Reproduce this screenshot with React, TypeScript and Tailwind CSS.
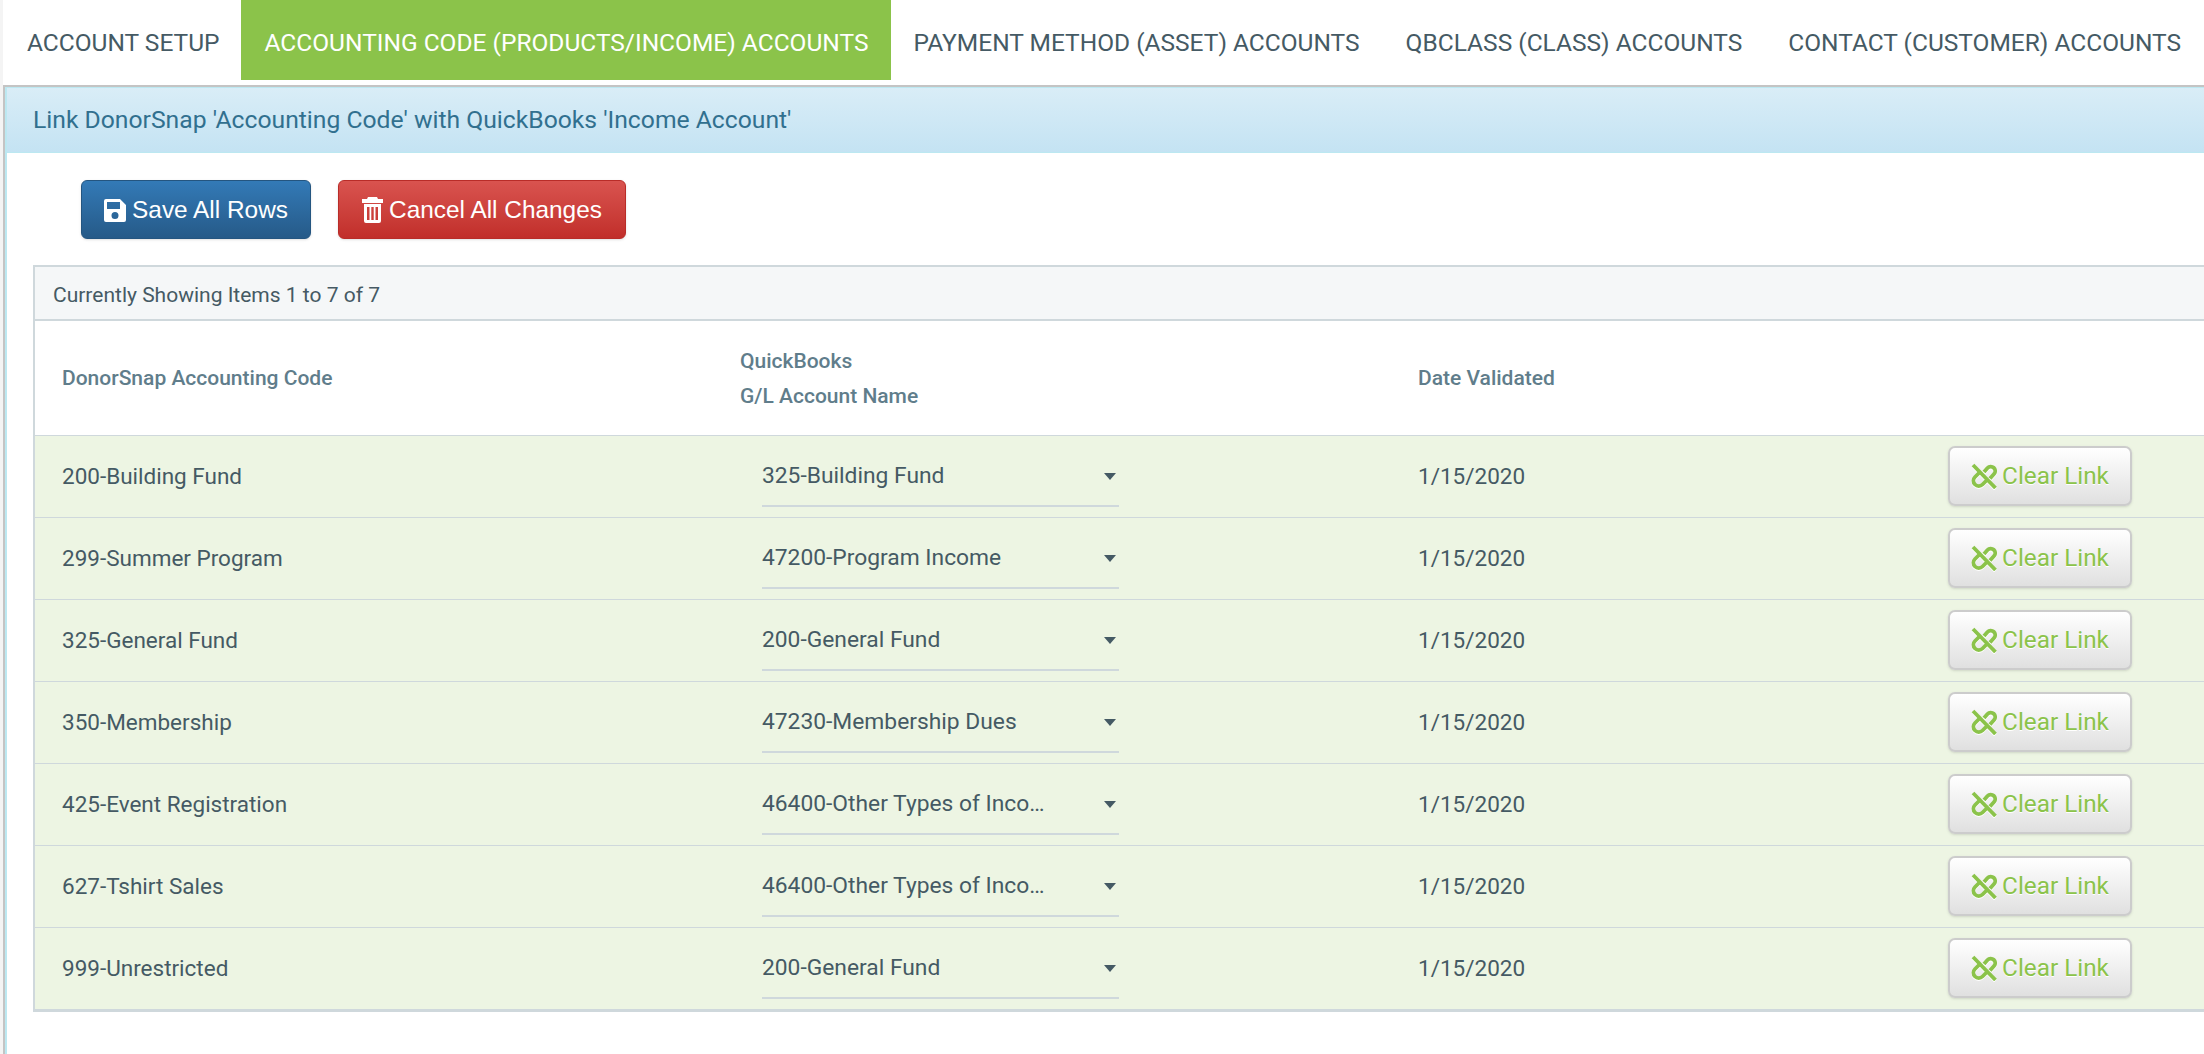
import React from "react"

const tabs = [
  "ACCOUNT SETUP",
  "ACCOUNTING CODE (PRODUCTS/INCOME) ACCOUNTS",
  "PAYMENT METHOD (ASSET) ACCOUNTS",
  "QBCLASS (CLASS) ACCOUNTS",
  "CONTACT (CUSTOMER) ACCOUNTS",
]

const rows = [
  { code: "200-Building Fund", account: "325-Building Fund" },
  { code: "299-Summer Program", account: "47200-Program Income" },
  { code: "325-General Fund", account: "200-General Fund" },
  { code: "350-Membership", account: "47230-Membership Dues" },
  { code: "425-Event Registration", account: "46400-Other Types of Income" },
  { code: "627-Tshirt Sales", account: "46400-Other Types of Income" },
  { code: "999-Unrestricted", account: "200-General Fund" },
]

function SaveIcon() {
  return (
    <svg width="22" height="23" viewBox="0 0 22 23" fill="currentColor" className="shrink-0">
      <path
        fillRule="evenodd"
        d="M2 0h14l6 6v15a2 2 0 0 1-2 2H2a2 2 0 0 1-2-2V2a2 2 0 0 1 2-2zm1 3v7h13V3zm8 10a3.500 3.500 0 1 0 0 7 3.500 3.500 0 0 0 0-7z"
      />
    </svg>
  )
}

function TrashIcon() {
  return (
    <svg width="21" height="26" viewBox="0 0 21 26" fill="currentColor" className="shrink-0">
      <path
        fillRule="evenodd"
        d="M6 0h9l1 2h5v4H0V2h5zM2 7h17v17a2 2 0 0 1-2 2H4a2 2 0 0 1-2-2zm3 3v13h2.500V10zm4.300 0v13h2.400V10zm4.200 0v13H16V10z"
      />
    </svg>
  )
}

function UnlinkIcon() {
  return (
    <svg
      width="26"
      height="26"
      viewBox="0 0 26 26"
      fill="none"
      stroke="currentColor"
      strokeWidth="3.800"
      className="shrink-0 drop-shadow-[0_1px_0_#fff]"
    >
      <path d="M2 2l22.500 23" />
      <path d="M13 9l3.500-4a4.400 4.400 0 0 1 6.500 6l-4 4.500" />
      <path d="M9.500 8.500L4 14a5 5 0 0 0 7.500 7.500L16 17" />
    </svg>
  )
}

function App() {
  return (
    <div className="min-h-screen bg-[#f4f4f4] pl-[3px] font-['Roboto',sans-serif] text-[#455a64] overflow-hidden">
      <div className="flex h-[85px] bg-white">
        {tabs.map((tab, index) => (
          <div
            key={tab}
            className={
              index === 1
                ? "h-[80px] pl-[24px] pr-[23px] pt-[7px] mr-[-1px] flex items-center text-[24.500px] whitespace-nowrap bg-[#8bc34a] text-white"
                : index === 0
                  ? "h-[80px] pl-[24px] pr-[21px] pt-[7px] flex items-center text-[24.500px] whitespace-nowrap"
                  : "h-[80px] px-[23px] pt-[7px] flex items-center text-[24.500px] whitespace-nowrap"
            }
          >
            {tab}
          </div>
        ))}
      </div>

      <div className="h-[969px] bg-white border-t-2 border-l-2 border-[#c4c4c4]">
        <div className="h-full border-t border-l-2 border-[#bce8f1]">
          <div className="h-[65px] flex items-center pl-[26px] text-[24.700px] text-[#31708f] bg-gradient-to-b from-[#d9edf7] to-[#c4e3f3] border-b border-[#bce8f1]">
            Link DonorSnap 'Accounting Code' with QuickBooks 'Income Account'
          </div>

          <div className="flex gap-[27px] pl-[74px] pt-[27px] font-['Liberation_Sans',sans-serif]">
            <button className="h-[59px] w-[230px] pt-[1px] flex items-center justify-center gap-[6px] rounded-[6px] text-white text-[24.400px] bg-gradient-to-b from-[#337ab7] to-[#265a88] border border-[#245580] shadow-sm">
              <SaveIcon />
              Save All Rows
            </button>
            <button className="h-[59px] w-[288px] pt-[1px] flex items-center justify-center gap-[6px] rounded-[6px] text-white text-[24.400px] bg-gradient-to-b from-[#d9534f] to-[#c12e2a] border border-[#b92c28] shadow-sm">
              <TrashIcon />
              Cancel All Changes
            </button>
          </div>

          <div className="ml-[26px] mt-[26px] border-2 border-b-[3px] border-r-0 border-[#cfd8dc]">
            <div className="h-[54px] flex items-center pl-[18px] pt-[6px] text-[21px] bg-[#f5f7f8] border-b-2 border-[#cfd8dc]">
              Currently Showing Items 1 to 7 of 7
            </div>

            <div className="h-[115px] pt-[2px] grid grid-cols-[678px_678px_530px_1fr] items-center pl-[27px] text-[21px] font-medium text-[#607d8b] border-b border-[#cfd8dc]">
              <div>DonorSnap Accounting Code</div>
              <div className="leading-[35px]">
                <div>QuickBooks</div>
                <div>G/L Account Name</div>
              </div>
              <div>Date Validated</div>
              <div />
            </div>

            {rows.map((row, index) => (
              <div
                key={row.code}
                className={
                  index === rows.length - 1
                    ? "h-[81px] grid grid-cols-[678px_678px_530px_1fr] items-center pl-[27px] text-[22.500px] bg-[#edf5e3]"
                    : "h-[82px] grid grid-cols-[678px_678px_530px_1fr] items-center pl-[27px] text-[22.500px] bg-[#edf5e3] border-b border-[#cfd8dc]"
                }
              >
                <div>{row.code}</div>
                <div className="pl-[22px]">
                  <div className="w-[357px] h-[59px] mt-[1px] flex items-center justify-between pr-[2px] text-[22.800px] border-b-2 border-[#cfd8dc]">
                    <span className="w-[287px] truncate">{row.account}</span>
                    <span className="mr-[1px] w-0 h-0 border-x-[6px] border-x-transparent border-t-[7px] border-t-[#455a64]" />
                  </div>
                </div>
                <div>1/15/2020</div>
                <div>
                  <button className="w-[184px] h-[60px] -mt-[1px] flex items-center justify-center gap-[5px] rounded-[7px] text-[24.300px] text-[#8bc34a] bg-gradient-to-b from-white to-[#e0e0e0] border-2 border-[#cccccc] shadow-sm [text-shadow:0_1px_0_#fff]">
                    <UnlinkIcon />
                    Clear Link
                  </button>
                </div>
              </div>
            ))}
          </div>
        </div>
      </div>
    </div>
  )
}

export default App
